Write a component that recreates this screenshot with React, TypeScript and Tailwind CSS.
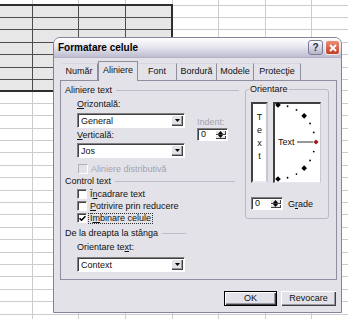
import React from 'react'

const colWidths = [33, 46, 47, 47, 46, 47, 46, 40]
const rowLines = [5, 17, 29, 42, 54, 67, 79, 90, 103, 115, 128, 140, 152, 165, 177, 190, 202, 214, 227, 239, 252, 264, 276, 289, 301, 314, 326]

function Sheet() {
  return (
    <div className="flex flex-col">
      {rowLines.map((line, r) => {
        const h = r === 0 ? line + 1 : line - rowLines[r - 1]
        return (
          <div key={r} className="flex shrink-0" style={{ height: h }}>
            {colWidths.map((w, c) => {
              const sel = r >= 1 && r <= 7 && c <= 3
              return (
                <div
                  key={c}
                  style={{ width: w }}
                  className={
                    sel
                      ? 'shrink-0 border-r border-b border-[#4d4d4d] bg-[#e7e7e7]'
                      : 'shrink-0 border-r border-b border-[#cdcdcd]'
                  }
                />
              )
            })}
          </div>
        )
      })}
    </div>
  )
}

function DownArrow() {
  return (
    <svg width="5" height="3" viewBox="0 0 5 3">
      <path d="M0 0h5L2.5 3z" fill="#000" />
    </svg>
  )
}

function Combo({ value }: { value: string }) {
  return (
    <div className="flex h-[15px] w-[108px] items-stretch border border-t-[#808080] border-l-[#808080] border-r-white border-b-white bg-white shadow-[inset_1px_1px_0_#404040]">
      <span className="flex-1 pl-[3px] pt-[1px] leading-[12px]">{value}</span>
      <span className="my-[1px] mr-px flex w-[12px] items-center justify-center bg-[#e3e2e8] shadow-[inset_1px_1px_0_#ffffff,inset_-1px_-1px_0_#404040,inset_-2px_-2px_0_#9a9aa2]">
        <DownArrow />
      </span>
    </div>
  )
}

function SpinButtons() {
  return (
    <span className="my-[1px] mr-px flex w-[11px] flex-col">
      <span className="flex flex-1 items-center justify-center bg-[#e3e2e8] shadow-[inset_1px_1px_0_#ffffff,inset_-1px_-1px_0_#404040]">
        <svg width="5" height="3" viewBox="0 0 5 3">
          <path d="M0 3h5L2.5 0z" fill="#000" />
        </svg>
      </span>
      <span className="flex flex-1 items-center justify-center bg-[#e3e2e8] shadow-[inset_1px_1px_0_#ffffff,inset_-1px_-1px_0_#404040]">
        <svg width="5" height="3" viewBox="0 0 5 3">
          <path d="M0 0h5L2.5 3z" fill="#000" />
        </svg>
      </span>
    </span>
  )
}

function Check({ checked, disabled }: { checked?: boolean; disabled?: boolean }) {
  return (
    <span
      className={
        disabled
          ? 'flex h-[10px] w-[10px] shrink-0 border border-t-[#b0b0b8] border-l-[#b0b0b8] border-r-white border-b-white bg-[#e3e2e8]'
          : 'flex h-[10px] w-[10px] shrink-0 items-center justify-center border border-t-[#808080] border-l-[#808080] border-r-white border-b-white bg-white shadow-[inset_1px_1px_0_#404040]'
      }
    >
      {checked && (
        <svg width="7" height="7" viewBox="0 0 7 7">
          <path d="M0.5 3.2L2.5 5.2L6.5 1.2" stroke="#000" strokeWidth="1.6" fill="none" />
        </svg>
      )}
    </span>
  )
}

function Header({ children, width }: { children: React.ReactNode; width: string }) {
  return (
    <div className={`flex h-[10px] items-center pl-[4px] ${width}`}>
      <span className="leading-[10px]">{children}</span>
      <span className="ml-[4px] h-px flex-1 bg-[#bdbdc7]" />
    </div>
  )
}

function Dial() {
  const dots = []
  for (let a = -90; a <= 90; a += 15) {
    const rad = (a * Math.PI) / 180
    const x = 3 + 37 * Math.cos(rad)
    const y = 38 - 37 * Math.sin(rad)
    if (a === 0) continue
    if (a % 45 === 0) {
      dots.push(<path key={a} d={`M${x} ${y - 2.8}L${x + 2.8} ${y}L${x} ${y + 2.8}L${x - 2.8} ${y}z`} fill="#000" />)
    } else {
      dots.push(<circle key={a} cx={x} cy={y} r="0.9" fill="#000" />)
    }
  }
  return (
    <svg className="block overflow-visible" width="45" height="78" viewBox="0 0 45 78">
      {dots}
      <text x="3" y="41" fontSize="9" fontFamily="Liberation Sans, Arial, sans-serif" fill="#111">
        Text
      </text>
      <line x1="22" y1="38" x2="38" y2="38" stroke="#333" strokeWidth="1" />
      <path d="M41 35.4L43.6 38L41 40.6L38.4 38z" fill="#9a1c1c" />
    </svg>
  )
}

function Tab({ label, width, active }: { label: string; width: string; active?: boolean }) {
  return (
    <div
      className={
        active
          ? `relative z-10 -mb-px flex h-[20px] items-center justify-center border border-b-0 border-[#8e8e9e] bg-[#e3e2e8] pb-[2px] ${width}`
          : `flex h-[17px] items-center justify-center border-t border-r border-t-[#d6d6de] border-r-[#8e8e9e] ${width}`
      }
    >
      {label}
    </div>
  )
}

export default function App() {
  return (
    <div className="relative h-[319px] w-[348px] overflow-hidden bg-white font-['Liberation_Sans',Arial,sans-serif] text-[9px] text-[#111]">
      <Sheet />
      <div className="pointer-events-none absolute left-[-2px] top-[4px] h-[88px] w-[175px] border-2 border-[#2e2e2e]" />

      <div className="absolute left-[53px] top-[37px] flex h-[276px] w-[289px] flex-col rounded-t-[7px] border border-[#84839a] bg-[#e3e2e8]">
        <div className="flex h-[20px] shrink-0 items-center justify-between rounded-t-[6px] border-b border-[#b3b2c4] bg-linear-to-b from-[#ffffff] via-[#e4e4ee] to-[#bebdd0] pl-[4px] pr-[1px]">
          <span className="text-[10px] font-bold leading-none text-black">Formatare celule</span>
          <div className="flex gap-[2px]">
            <div className="flex h-[15px] w-[15px] items-center justify-center rounded-[3px] border border-[#7b7a94] bg-linear-to-b from-[#fbfbff] to-[#b4b3c9] text-[10px] font-bold leading-none text-[#2a2a48]">
              ?
            </div>
            <div className="flex h-[15px] w-[15px] items-center justify-center rounded-[3px] border border-[#f2eeee] bg-linear-to-b from-[#ec8f74] to-[#c13d27]">
              <svg width="8" height="8" viewBox="0 0 8 8">
                <path d="M1 1L7 7M7 1L1 7" stroke="#fff" strokeWidth="1.8" />
              </svg>
            </div>
          </div>
        </div>

        <div className="flex flex-1 flex-col pl-[6px] pr-[4px] pt-[3px]">
          <div className="flex h-[19px] items-end pl-px">
            <Tab label="Număr" width="w-[37px]" />
            <Tab label="Aliniere" width="w-[40px]" active />
            <Tab label="Font" width="w-[39px]" />
            <Tab label="Bordură" width="w-[40px]" />
            <Tab label="Modele" width="w-[37px]" />
            <Tab label="Protecţie" width="w-[47px]" />
          </div>

          <div className="flex h-[200px] border border-[#8e8e9e] bg-[#e3e2e8]">
            <div className="flex w-[178px] flex-col pt-[4px]">
              <Header width="w-[178px]">Aliniere text</Header>

              <div className="mt-[4px] flex">
                <div className="ml-[16px] flex w-[108px] flex-col">
                  <div className="h-[10px] leading-[10px]">
                    <u>O</u>rizontală:
                  </div>
                  <div className="mt-[4px]">
                    <Combo value="General" />
                  </div>
                  <div className="mt-[2px] h-[10px] leading-[10px]">
                    <u>V</u>erticală:
                  </div>
                  <div className="mt-[3px]">
                    <Combo value="Jos" />
                  </div>
                </div>
                <div className="ml-[12px] flex flex-col pt-[18px]">
                  <div className="h-[10px] leading-[10px] text-[#a3a3ae]">Indent:</div>
                  <div className="mt-px flex h-[13px] w-[31px] border border-t-[#808080] border-l-[#808080] border-r-white border-b-white bg-white shadow-[inset_1px_1px_0_#404040]">
                    <span className="flex-1 pl-[3px] leading-[11px]">0</span>
                    <SpinButtons />
                  </div>
                </div>
              </div>

              <div className="mt-[6px] flex h-[10px] items-center pl-[17px]">
                <Check disabled />
                <span className="ml-[3px] leading-[10px] text-[#a3a3ae]">Aliniere distributivă</span>
              </div>

              <div className="mt-[2px]">
                <Header width="w-[174px]">Control text</Header>
              </div>

              <div className="mt-[3px] flex h-[10px] items-center pl-[16px]">
                <Check />
                <span className="ml-[3px] leading-[10px]">
                  Î<u>n</u>cadrare text
                </span>
              </div>
              <div className="mt-[2px] flex h-[10px] items-center pl-[16px]">
                <Check />
                <span className="ml-[3px] leading-[10px]">
                  <u>P</u>otrivire prin reducere
                </span>
              </div>
              <div className="mt-[2px] flex h-[10px] items-center pl-[16px]">
                <Check checked />
                <span className="ml-[2px] px-px leading-[9px] outline-1 outline-dotted outline-[#333]">
                  Î<u>m</u>binare celule
                </span>
              </div>

              <div className="mt-[5px]">
                <Header width="w-[125px]">De la dreapta la stânga</Header>
              </div>

              <div className="mt-[4px] h-[10px] pl-[16px] leading-[10px]">
                Orientare te<u>x</u>t:
              </div>
              <div className="mt-[5px] pl-[16px]">
                <Combo value="Context" />
              </div>
            </div>

            <fieldset className="ml-[6px] mt-[3px] h-[135px] w-[84px] rounded-[3px] border border-[#b9b9c5] px-0 pb-0">
              <legend className="ml-[3px] px-px leading-[10px]">Orientare</legend>
              <div className="flex flex-col pl-[5px] pt-[8px]">
                <div className="flex gap-[5px]">
                  <div className="flex h-[81px] w-[17px] flex-col items-center border-2 border-t-[#404040] border-l-[#404040] border-r-[#c8c8d0] border-b-[#e8e8ee] bg-white pt-[7px] leading-[13px]">
                    <span>T</span>
                    <span>e</span>
                    <span>x</span>
                    <span>t</span>
                  </div>
                  <div className="h-[81px] w-[48px] border-2 border-r border-b border-t-[#404040] border-l-[#404040] border-r-[#c8c8d0] border-b-[#e8e8ee] bg-white">
                    <Dial />
                  </div>
                </div>
                <div className="mt-[14px] flex items-center">
                  <div className="flex h-[13px] w-[32px] border border-t-[#808080] border-l-[#808080] border-r-white border-b-white bg-white shadow-[inset_1px_1px_0_#404040]">
                    <span className="flex-1 pl-[3px] leading-[11px]">0</span>
                    <SpinButtons />
                  </div>
                  <span className="ml-[5px] leading-[10px]">
                    G<u>r</u>ade
                  </span>
                </div>
              </div>
            </fieldset>
          </div>

          <div className="mt-[11px] flex justify-end gap-[4px] pr-px">
            <div className="flex h-[15px] w-[53px] items-center justify-center border border-black bg-[#e3e2e8] shadow-[inset_1px_1px_0_#ffffff,inset_-1px_-1px_0_#404040,inset_-2px_-2px_0_#9a9aa2]">
              OK
            </div>
            <div className="flex h-[15px] w-[55px] items-center justify-center bg-[#e3e2e8] shadow-[inset_1px_1px_0_#ffffff,inset_-1px_-1px_0_#404040,inset_-2px_-2px_0_#9a9aa2]">
              Revocare
            </div>
          </div>
        </div>
      </div>
    </div>
  )
}
